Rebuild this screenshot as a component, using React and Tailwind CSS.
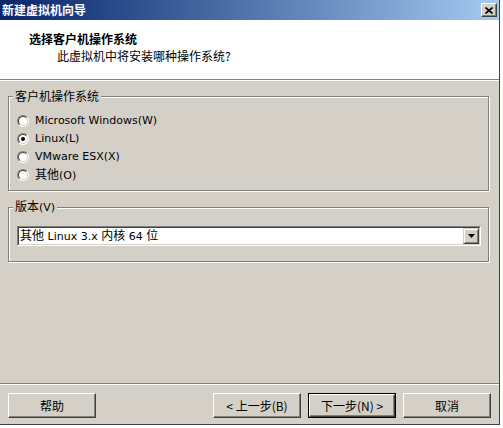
import React from "react";

function Radio({ checked, children }) {
  return (
    <div className="flex items-center h-[18px]">
      <span className="w-[12px] h-[12px] rounded-full border border-t-[#808080] border-l-[#808080] border-r-white border-b-white">
        <span className="flex items-center justify-center w-full h-full rounded-full bg-white border border-t-[#404040] border-l-[#404040] border-r-[#d4d0c8] border-b-[#d4d0c8]">
          {checked ? <span className="w-[4px] h-[4px] rounded-full bg-black" /> : null}
        </span>
      </span>
      <span className="ml-[6px] leading-[14px]">{children}</span>
    </div>
  );
}

function Button({ children, isDefault }) {
  return (
    <div
      className={
        isDefault
          ? "w-[88px] h-[25px] border border-black"
          : "w-[88px] h-[25px]"
      }
    >
      <div className="w-full h-full flex items-center justify-center border border-t-white border-l-white border-r-[#404040] border-b-[#404040] shadow-[inset_-1px_-1px_0_#808080] text-[12px] font-['Noto_Sans_CJK_SC',sans-serif] leading-[14px] text-black">
        {children}
      </div>
    </div>
  );
}

export default function App() {
  return (
    <div className="w-[503px] h-[428px] bg-white font-['DejaVu_Sans','Noto_Sans_CJK_SC',sans-serif] text-[11px] text-black">
      <div className="w-[500px] h-[425px] bg-[#d4d0c8] flex flex-col border-r border-b border-[#404040]">
        {/* Title bar */}
        <div className="h-[20px] flex items-center justify-between pl-[2px] pr-[2px] bg-linear-to-r from-[#0a246a] to-[#a6caf0]">
          <span className="text-white font-bold text-[12px] leading-[14px] font-['Noto_Sans_CJK_SC',sans-serif]">
            新建虚拟机向导
          </span>
          <div className="w-[16px] h-[14px] bg-[#d4d0c8] flex items-center justify-center border border-t-white border-l-white border-r-[#404040] border-b-[#404040] shadow-[inset_-1px_-1px_0_#808080]">
            <svg width="8" height="7" viewBox="0 0 8 7">
              <path d="M0.5 0.5 L7.5 6.5 M7.5 0.5 L0.5 6.5" stroke="black" strokeWidth="1.6" />
            </svg>
          </div>
        </div>

        {/* Header */}
        <div className="h-[59px] bg-white pt-[12px] font-['Noto_Sans_CJK_SC',sans-serif] text-[12px] leading-[14px]">
          <div className="pl-[29px] font-bold">选择客户机操作系统</div>
          <div className="pl-[57px] mt-[3px]">此虚拟机中将安装哪种操作系统?</div>
        </div>
        <div className="h-[1px] bg-[#808080]" />
        <div className="h-[1px] bg-white" />

        {/* Body */}
        <div className="flex-1 px-[8px] pr-[10px]">
          <fieldset className="mt-[8px] border border-[#808080] shadow-[1px_1px_0_#fff,inset_1px_1px_0_#fff]">
            <legend className="ml-[4px] px-[2px] bg-[#d4d0c8] text-[12px] leading-[14px] font-['Noto_Sans_CJK_SC',sans-serif]">
              客户机操作系统
            </legend>
            <div className="pl-[8px] pt-[9px] pb-[6px]">
              <Radio>Microsoft Windows(W)</Radio>
              <Radio checked>Linux(L)</Radio>
              <Radio>VMware ESX(X)</Radio>
              <Radio>
                <span className="text-[12px]">其他</span>(O)
              </Radio>
            </div>
          </fieldset>

          <fieldset className="mt-[9px] border border-[#808080] shadow-[1px_1px_0_#fff,inset_1px_1px_0_#fff]">
            <legend className="ml-[4px] px-[2px] bg-[#d4d0c8] leading-[14px]">
              <span className="text-[12px]">版本</span>(V)
            </legend>
            <div className="pl-[8px] pr-[7px] pt-[11px] pb-[15px]">
              <div className="h-[20px] border border-t-[#808080] border-l-[#808080] border-r-white border-b-white">
                <div className="w-full h-full bg-white flex items-center border border-t-[#404040] border-l-[#404040] border-r-[#d4d0c8] border-b-[#d4d0c8]">
                  <span className="flex-1 pl-[1px] leading-[14px]">
                    <span className="text-[12px]">其他</span> Linux 3.x <span className="text-[12px]">内核</span> 64 <span className="text-[12px]">位</span>
                  </span>
                  <div className="w-[16px] h-full bg-[#d4d0c8] flex items-center justify-center border border-t-[#d4d0c8] border-l-[#d4d0c8] border-r-[#404040] border-b-[#404040] shadow-[inset_1px_1px_0_#fff,inset_-1px_-1px_0_#808080]">
                    <svg width="7" height="4" viewBox="0 0 7 4">
                      <path d="M0 0 H7 L3.5 4 Z" fill="black" />
                    </svg>
                  </div>
                </div>
              </div>
            </div>
          </fieldset>
        </div>

        {/* Footer */}
        <div className="h-[1px] bg-[#808080]" />
        <div className="h-[1px] bg-white" />
        <div className="h-[39px] pt-[8px] pl-[8px] flex">
          <Button>帮助</Button>
          <div className="ml-[117px] flex gap-[7px]">
            <Button>&lt; 上一步(B)</Button>
            <Button isDefault>下一步(N) &gt;</Button>
            <Button>取消</Button>
          </div>
        </div>
      </div>
    </div>
  );
}
